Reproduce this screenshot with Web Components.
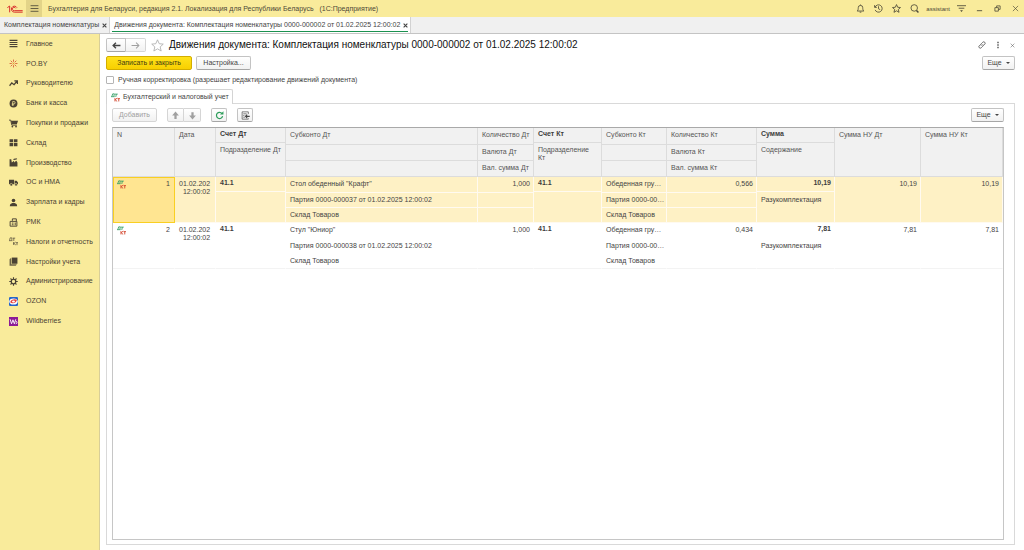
<!DOCTYPE html>
<html lang="ru">
<head>
<meta charset="utf-8">
<meta name="viewport" content="width=device-width, initial-scale=1">
<title>Движения документа</title>
<style>
html, body { height: 100%; margin: 0; }
body { font: 7px/8px "Liberation Sans", Arial, sans-serif; color: #444; background: #fff; }
</style>
</head>
<body>
<app-shell>
  <title-bar slot="top" user="assistant">Бухгалтерия для Беларуси, редакция 2.1. Локализация для Республики Беларусь &nbsp; (1С:Предприятие)</title-bar>
  <tab-strip slot="tabs">
    <window-tab>Комплектация номенклатуры</window-tab>
    <window-tab active>Движения документа: Комплектация номенклатуры 0000-000002 от 01.02.2025 12:00:02</window-tab>
  </tab-strip>
  <side-nav slot="nav">
    <nav-item icon="menu">Главное</nav-item>
    <nav-item icon="spark">PO.BY</nav-item>
    <nav-item icon="trend">Руководителю</nav-item>
    <nav-item icon="coin">Банк и касса</nav-item>
    <nav-item icon="cart">Покупки и продажи</nav-item>
    <nav-item icon="boxes">Склад</nav-item>
    <nav-item icon="factory">Производство</nav-item>
    <nav-item icon="truck">ОС и НМА</nav-item>
    <nav-item icon="person">Зарплата и кадры</nav-item>
    <nav-item icon="register">РМК</nav-item>
    <nav-item icon="dtktgrey">Налоги и отчетность</nav-item>
    <nav-item icon="books">Настройки учета</nav-item>
    <nav-item icon="gear">Администрирование</nav-item>
    <nav-item icon="ozon">OZON</nav-item>
    <nav-item icon="wb">Wildberries</nav-item>
  </side-nav>
  <document-form heading="Движения документа: Комплектация номенклатуры 0000-000002 от 01.02.2025 12:00:02">
    <page-panel label="Бухгалтерский и налоговый учет">
      <entries-table></entries-table>
    </page-panel>
  </document-form>
</app-shell>

<script>
const svg = (body, box = 16) => `<svg viewBox="0 0 ${box} ${box}" fill="none" stroke="currentColor" stroke-width="1.5" aria-hidden="true">${body}</svg>`;
const ICONS = {
  menu: svg('<path d="M1 2.5h14M1 6.2h14M1 9.8h14M1 13.5h14" stroke-width="2"/>'),
  burger: svg('<path d="M1 3h14M1 8h14M1 13h14"/>'),
  spark: svg('<g stroke="#d9603a" stroke-width="1.6"><path d="M8 1v4M8 11v4M1 8h4M11 8h4M3 3l3 3M10 10l3 3M13 3l-3 3M3 13l3-3"/></g><circle cx="8" cy="8" r="1.3" fill="#e0a030" stroke="none"/>'),
  trend: svg('<path d="M1 12l4-5 4 3 5-6M9.500 3.500H15V9" stroke-width="2.2"/>'),
  coin: svg('<circle cx="8" cy="8" r="7" fill="currentColor" stroke="none"/><path d="M6.500 12V4.500h2.300a2 2 0 010 4.200H5M5 10.500h4" stroke="#f9eb9b" stroke-width="1.3"/>'),
  cart: svg('<path d="M0 2h3l2 9h9" stroke-width="1.6"/><path d="M3.500 3H16l-2 6.500H5z" fill="currentColor" stroke="none"/><circle cx="6" cy="13.500" r="1.600" fill="currentColor" stroke="none"/><circle cx="12.500" cy="13.500" r="1.600" fill="currentColor" stroke="none"/>'),
  boxes: svg('<path d="M1 2h6.300v5.500H1zM8.700 2H15v5.500H8.700zM1 9h6.300v5.500H1zM8.700 9H15v5.500H8.700z" fill="currentColor" stroke="none"/>'),
  factory: svg('<path d="M1 15V2h3l1 6 4-3v3l4-3 2 3v7z" fill="currentColor" stroke="none"/><path d="M8 3c2-2 4 0 6-2" stroke-width="1.800"/>'),
  truck: svg('<path d="M0 3h9v8H0zM10 5h3.500L16 8v3h-6z" fill="currentColor" stroke="none"/><g fill="currentColor" stroke="#f9eb9b" stroke-width="1"><circle cx="4" cy="12" r="2.300"/><circle cx="12.500" cy="12" r="2.300"/></g>'),
  person: svg('<circle cx="8" cy="4.500" r="3.200" fill="currentColor" stroke="none"/><path d="M1.500 14.500c0-4 2-4.500 4.500-5.500h4c2.500 1 4.500 1.500 4.500 5.500z" fill="currentColor" stroke="none"/>'),
  register: svg('<path d="M2 6h12v8.500H2zM6 5V1.500h7V6M5 9h3M5 12h3M11 8v5" stroke-width="1.700"/>'),
  dtktgrey: svg('<path d="M1 6l1-4.500h3V6M0 6.500h6M6.500 2H11M8.500 2v5M8 9v5M12 9l-3.500 2.500L12 14M12.500 10H16M14.200 10v4.500" stroke-width="1.200"/>'),
  dtkt: svg('<path d="M1.500 6l1.500-4.500h3L5 6M0 6.500h6.500M7 2h5M9.500 2L8.500 7" stroke="#2f9c62" stroke-width="1.500"/><path d="M7 9v6M11 9l-3.500 3L11 15M11.500 10H16M13.800 10v5" stroke="#d2452c" stroke-width="1.600"/>'),
  books: svg('<path d="M5 1h10v11H5z" fill="currentColor" stroke="none"/><path d="M1 4l3-2.500V13h10l-2 2.500H1z" fill="currentColor" stroke="none" opacity=".8"/>'),
  gear: svg('<circle cx="8" cy="8" r="4" stroke-width="2.200"/><path d="M8 .5V4M8 12v3.500M.5 8H4M12 8h3.500M2.700 2.700L5 5M11 11l2.300 2.300M13.300 2.700L11 5M5 11l-2.300 2.300" stroke-width="2"/>'),
  ozon: svg('<rect width="16" height="16" rx="2" fill="#2864c8" stroke="none"/><ellipse cx="8" cy="8" rx="7.500" ry="5.500" fill="#fff" stroke="none"/><path d="M2 9.500c1-5 8-7 12-4.500 0 5-7 8-12 4.500z" fill="#e8403c" stroke="none"/><ellipse cx="8" cy="8" rx="2.600" ry="1.600" fill="#fff" stroke="none"/>'),
  wb: svg('<rect width="16" height="16" fill="#8c1b96" stroke="none"/><path d="M2 4l2.500 8L7 5l2.500 7L12 4M12 7.500a2.200 2.200 0 110 4.400" stroke="#fff" stroke-width="1.600"/>'),
  logo: '<svg viewBox="0 0 48 24" fill="none" stroke="#d8302c" stroke-width="3" aria-hidden="true"><path d="M1 8l7-5v19M30 8a9 9 0 10-8 13.500h25M26 10a5 5 0 10-4 7h25"/></svg>',
  bell: svg('<path d="M2 12.500c2-1.500 2-4 2-6a4 4 0 018 0c0 2 0 4.500 2 6zM6.500 14.500h3M8 2.500V1"/>'),
  history: svg('<path d="M2 5.500A6.500 6.500 0 112 10.500M1 2v4h4M8 4v4.500l3 1.500"/>'),
  star: svg('<path d="M8 1l2.100 4.800 5 .5-3.800 3.400 1.200 5.100L8 12.100l-4.500 2.700 1.200-5.100L.9 6.300l5-.5z"/>'),
  starthin: svg('<path d="M8 1l2.100 4.800 5 .5-3.800 3.400 1.200 5.100L8 12.100l-4.500 2.700 1.200-5.100L.9 6.300l5-.5z" stroke-width="1"/>'),
  search: svg('<circle cx="7.500" cy="7" r="5.800"/><path d="M11.500 11.500L15 15" stroke-width="2.600"/>'),
  filter: svg('<path d="M0 3h16M3 7.500h10"/><path d="M5.500 11h5L8 14z" fill="currentColor" stroke="none"/>'),
  minimize: svg('<path d="M2 13h12" stroke-width="2"/>'),
  restore: svg('<path d="M2 6h8v8H2zM6 6V2h8v8h-4" stroke-width="1.800"/>'),
  close: svg('<path d="M2 2l12 12M14 2L2 14"/>'),
  closebold: svg('<path d="M2 2l12 12M14 2L2 14" stroke-width="3.500"/>'),
  link: svg('<path d="M6.500 9.500a3 3 0 010-4l3-3a2.800 2.800 0 014 4L11 9M9.500 6.500a3 3 0 010 4l-3 3a2.800 2.800 0 01-4-4L5 7"/>'),
  dots: svg('<path d="M8 1.500v3M8 6.500v3M8 11.500v3" stroke-width="2.600"/>'),
  left: svg('<path d="M15 8H2M7 3L2 8l5 5" stroke-width="2.400"/>'),
  right: svg('<path d="M1 8h13M9 3l5 5-5 5" stroke-width="1.800"/>'),
  up: svg('<path d="M8 1l6 7h-4v6H6V8H2z" fill="currentColor" stroke="none"/>'),
  down: svg('<path d="M8 15l6-7h-4V2H6v6H2z" fill="currentColor" stroke="none"/>'),
  refresh: svg('<path d="M12.500 4.500A5.500 5.500 0 1013.500 9" stroke="#2e9e5b" stroke-width="2.200"/><path d="M9 6h6V.5z" fill="#2e9e5b" stroke="none"/>'),
  report: svg('<path d="M2 1.500h11v4M13 13v1.500H2v-13M4 5h6M4 8h2M4 11h3" stroke-width="1.200"/><path d="M15.500 9.500H8M11 6.500l-3 3 3 3" stroke-width="1.900"/>')
};

function define(name, html, setup) {
  const template = document.createElement('template');
  template.innerHTML = html;
  customElements.define(name, class extends HTMLElement {
    constructor() {
      super();
      this.attachShadow({ mode: 'open' }).append(template.content.cloneNode(true));
    }
    connectedCallback() { if (setup) setup(this, this.shadowRoot); }
  });
}

define('ui-icon', `<style>
  :host { display: inline-block; flex: none; width: var(--icon-size, 9px); height: var(--icon-size, 9px); }
  :host([name="logo"]) { width: 16px; height: 8px; }
  svg { display: block; width: 100%; height: 100%; }
</style><span></span>`, (el, root) => { root.querySelector('span').innerHTML = ICONS[el.getAttribute('name')] || ''; });

define('app-shell', `<style>
  :host { display: grid; min-height: 100vh; grid-template: auto auto 1fr / 100px minmax(0, 1fr);
    grid-template-areas: "top top" "tabs tabs" "nav main"; }
  header { grid-area: top; } .tabs { grid-area: tabs; } aside { grid-area: nav; display: flex; }
  main { grid-area: main; display: flex; min-width: 0; }
</style>
<header><slot name="top"></slot></header><div class="tabs"><slot name="tabs"></slot></div>
<aside><slot name="nav"></slot></aside><main><slot></slot></main>`);

define('title-bar', `<style>
  :host { display: flex; align-items: center; height: 17px; background: #f9eb9b; color: #4d4938; }
  button { all: unset; display: flex; align-items: center; justify-content: center; }
  .logo { margin-left: 7px; }
  .burger { width: 16px; height: 17px; margin: 0 6px 0 3px; background: #e3d488; }
  .title { flex: 1; white-space: nowrap; overflow: hidden; }
  .tools { display: flex; align-items: center; gap: 9px; padding-right: 4px; }
  .user { font-size: 6px; margin: 0 -2px; }
  .window { margin-left: 0; --icon-size: 7px; width: 9px; }
</style>
<ui-icon class="logo" name="logo"></ui-icon>
<button class="burger" aria-label="Меню"><ui-icon name="burger"></ui-icon></button>
<span class="title"><slot></slot></span>
<div class="tools">
  <button aria-label="Оповещения"><ui-icon name="bell"></ui-icon></button>
  <button aria-label="История"><ui-icon name="history"></ui-icon></button>
  <button aria-label="Избранное"><ui-icon name="star"></ui-icon></button>
  <button aria-label="Поиск"><ui-icon name="search"></ui-icon></button>
  <span class="user"></span>
  <button aria-label="Настройки"><ui-icon name="filter"></ui-icon></button>
  <button class="window" aria-label="Свернуть"><ui-icon name="minimize"></ui-icon></button>
  <button class="window" aria-label="Восстановить"><ui-icon name="restore"></ui-icon></button>
  <button class="window" aria-label="Закрыть"><ui-icon name="close"></ui-icon></button>
</div>`, (el, root) => { root.querySelector('.user').textContent = el.getAttribute('user'); });

define('tab-strip', `<style>
  :host { display: flex; height: 16px; background: #f0f0f0; border-bottom: 1px solid #c4c4c4; }
</style><slot></slot>`);

define('window-tab', `<style>
  :host { display: flex; align-items: center; gap: 3px; padding: 0 2px 0 4px; border-right: 1px solid #d2d2d2; position: relative; white-space: nowrap; }
  :host([active]) { background: #fff; }
  :host([active])::after { content: ""; position: absolute; left: 2px; right: 2px; bottom: 1px; height: 1px; background: #1b9150; }
  button { all: unset; display: flex; --icon-size: 5px; }
</style><slot></slot><button aria-label="Закрыть вкладку"><ui-icon name="closebold"></ui-icon></button>`);

define('side-nav', `<style>
  :host { display: block; flex: 1; background: #f9eb9b; border-right: 1px solid #d8ce98; }
  nav { display: grid; grid-auto-rows: 1fr; height: 297px; }
</style><nav><slot></slot></nav>`);

define('nav-item', `<style>
  :host { display: flex; }
  a { flex: 1; display: flex; align-items: center; gap: 8px; padding-left: 9px; color: #4a4234; text-decoration: none; white-space: nowrap; }
</style><a href="#"><ui-icon></ui-icon><span><slot></slot></span></a>`, (el, root) => {
  const icon = root.querySelector('ui-icon');
  icon.setAttribute('name', el.getAttribute('icon'));
  icon.connectedCallback();
});

define('ui-button', `<style>
  :host { display: inline-flex; height: 14px; }
  button { flex: 1; display: flex; align-items: center; justify-content: center; gap: 4px; box-sizing: border-box; margin: 0; padding: 0;
    font: inherit; color: inherit; white-space: nowrap; border: 1px solid #c3c3c3; border-bottom-color: #a6a6a6; border-radius: 2px;
    background: linear-gradient(#fff, #f1f1f1); }
  :host([kind="primary"]) button { background: linear-gradient(#ffe21a, #f8d000); border-color: #d3ad00; color: #443c10; }
  :host([kind="off"]) button { color: #a0a0a0; border-color: #d5d5d5; }
  :host([side="left"]) button { border-radius: 2px 0 0 2px; }
  :host([side="right"]) button { border-radius: 0 2px 2px 0; border-left: 0; }
  .arrow { display: none; border: 2px solid transparent; border-top-color: currentColor; border-bottom: 0; }
  :host([menu]) .arrow { display: block; }
</style><button><slot></slot><i class="arrow"></i></button>`, (el, root) => {
  const label = el.getAttribute('label');
  if (label) root.querySelector('button').setAttribute('aria-label', label);
  if (!el.hasAttribute('menu')) root.querySelector('.arrow').remove();
});

define('document-form', `<style>
  :host { display: flex; flex: 1; min-width: 0; flex-direction: column; padding: 4px 9px 5px 6px; }
  .head { display: flex; align-items: center; height: 14px; }
  .head ui-button { width: 20px; }
  .star { --icon-size: 13px; color: #aaa; margin: 0 5px; }
  h1 { flex: 1; margin: 0; font-size: 10px; line-height: 14px; font-weight: 400; color: #111; white-space: nowrap; }
  .plain { all: unset; display: flex; margin-left: 8px; --icon-size: 8px; }
  .plain.small { --icon-size: 5px; }
  .commands { display: flex; gap: 4px; margin-top: 4px; }
  .save { width: 86px; } .setup { width: 55px; } .more { width: 33px; margin-left: auto; }
  label { display: flex; align-items: center; gap: 4px; height: 10px; margin: 5px 0 4px; }
  input { appearance: none; width: 8px; height: 8px; margin: 0; border: 1px solid #b5b5b5; border-radius: 1px; background: #fff; }
</style>
<div class="head">
  <ui-button side="left" label="Назад"><ui-icon name="left"></ui-icon></ui-button>
  <ui-button side="right" kind="off" label="Вперед"><ui-icon name="right"></ui-icon></ui-button>
  <ui-icon class="star" name="starthin"></ui-icon><h1></h1>
  <button class="plain" aria-label="Ссылка"><ui-icon name="link"></ui-icon></button>
  <button class="plain" aria-label="Действия"><ui-icon name="dots"></ui-icon></button>
  <button class="plain small" aria-label="Закрыть"><ui-icon name="close"></ui-icon></button>
</div>
<div class="commands">
  <ui-button class="save" kind="primary">Записать и закрыть</ui-button>
  <ui-button class="setup">Настройка...</ui-button>
  <ui-button class="more" menu>Еще</ui-button>
</div>
<label><input type="checkbox">Ручная корректировка (разрешает редактирование движений документа)</label>
<slot></slot>`, (el, root) => { root.querySelector('h1').textContent = el.getAttribute('heading'); });

define('page-panel', `<style>
  :host { display: flex; flex: 1; flex-direction: column; }
  .tab { position: relative; z-index: 1; align-self: flex-start; display: flex; align-items: center; gap: 3px; box-sizing: border-box; height: 15px; padding: 0 3px 0 4px;
    margin-bottom: -1px; background: #fff; border: 1px solid #d4d4d4; border-bottom: 0; border-radius: 2px 2px 0 0; }
  .page { display: flex; flex: 1; flex-direction: column; padding: 4px 10px 4px 5px; border: 1px solid #d9d9d9; }
  .bar { display: flex; height: 14px; align-items: center; margin-bottom: 5px; }
  .add { width: 45px; margin-right: 10px; } .move { width: 17px; } .sq { width: 16px; margin-left: 10px; } .more { width: 33px; margin-left: auto; }
</style>
<div class="tab"><ui-icon name="dtkt"></ui-icon><span></span></div>
<div class="page">
  <div class="bar">
    <ui-button class="add" kind="off">Добавить</ui-button>
    <ui-button class="move" side="left" kind="off" label="Вверх"><ui-icon name="up"></ui-icon></ui-button>
    <ui-button class="move" side="right" kind="off" label="Вниз"><ui-icon name="down"></ui-icon></ui-button>
    <ui-button class="sq" label="Обновить"><ui-icon name="refresh"></ui-icon></ui-button>
    <ui-button class="sq" label="Отчет"><ui-icon name="report"></ui-icon></ui-button>
    <ui-button class="more" menu>Еще</ui-button>
  </div>
  <slot></slot>
</div>`, (el, root) => { root.querySelector('.tab span').textContent = el.getAttribute('label'); });

const WIDTHS = [62, 41, 70, 192, 56, 68, 65, 90, 78, 86, 82];
const HEAD = [['N'], ['Дата'], ['*Счет Дт', 'Подразделение Дт'], ['Субконто Дт', '', ''], ['Количество Дт', 'Валюта Дт', 'Вал. сумма Дт'],
  ['*Счет Кт', 'Подразделение Кт'], ['Субконто Кт', '', ''], ['Количество Кт', 'Валюта Кт', 'Вал. сумма Кт'], ['*Сумма', 'Содержание'], ['Сумма НУ Дт'], ['Сумма НУ Кт']];
const entry = (n, item, batch, qtyDt, qtyKt, sum) => [[n], ['01.02.202 12:00:02'], ['*41.1', ''], [item, `Партия 0000-${batch} от 01.02.2025 12:00:02`, 'Склад Товаров'],
  ['>' + qtyDt, '', ''], ['*41.1', ''], ['Обеденная гру…', 'Партия 0000-00…', 'Склад Товаров'], ['>' + qtyKt, '', ''], ['*>' + sum, 'Разукомплектация'], ['>' + sum], ['>' + sum]];
const ROWS = [entry('1', 'Стол обеденный "Крафт"', '000037', '1,000', '0,566', '10,19'), entry('2', 'Стул "Юниор"', '000038', '1,000', '0,434', '7,81')];
const stack = (lines) => `<div class="stack n${lines.length}">` + lines.map(t => {
  const bold = t.startsWith('*'), right = t.includes('>');
  return `<div class="${bold ? 'bold ' : ''}${right ? 'right' : ''}">${t.replace(/[*>]/g, '')}</div>`;
}).join('') + '</div>';

define('entries-table', `<style>
  :host { display: block; flex: 1; border: 1px solid #c6c6c6; border-top-color: #a9a9a9; }
  table { width: 100%; table-layout: fixed; border-collapse: separate; border-spacing: 0; }
  th, td { padding: 0; font-weight: 400; text-align: left; vertical-align: top; box-sizing: border-box; }
  th { height: 49px; background: #f1f1f1; border-right: 1px solid #dcdcdc; border-bottom: 1px solid #dcdcdc; color: #555; }
  td { height: 46px; border-right: 1px solid transparent; border-bottom: 1px solid #f3f3f3; }
  .chosen td { background: #fef1c5; border-color: #fffaf0; }
  .stack { display: grid; }
  th .stack { height: 48px; } td .stack { height: 45px; }
  .stack > div { padding: 3px 3px 0 4px; line-height: 8px; box-sizing: border-box; }
  .n3 { grid-template-rows: repeat(3, 1fr); }
  .n3 > div { white-space: nowrap; }
  .n2 { grid-template-rows: 14px 1fr; }
  .n3 > div + div, .n2 > div + div { border-top: 1px solid transparent; }
  th .n3 > div + div, th .n2 > div + div { border-color: #dcdcdc; }
  .chosen .n3 > div + div, .chosen .n2 > div + div { border-color: #fffaf0; }
  .stack > .bold { font-weight: 700; padding-top: 2px; color: #3d3d3d; }
  .right { text-align: right; }
  td .n2 > div + div { padding-top: 4px; }
  .date .stack > div { text-align: right; padding-right: 5px; }
  .num { display: flex; justify-content: space-between; height: 45px; padding: 3px 4px 0 4px; box-sizing: border-box; }
  .chosen .current { border: 0; }
  .current .num { height: 46px; background: #ffe591; border: 1px solid #f9cf22; padding: 2px 4px 0 3px; }
</style>
<table><colgroup></colgroup><thead><tr></tr></thead><tbody></tbody></table>`, (el, root) => {
  root.querySelector('colgroup').innerHTML = WIDTHS.map(w => `<col style="width:${w}px">`).join('');
  root.querySelector('thead tr').innerHTML = HEAD.map(c => `<th scope="col">${stack(c)}</th>`).join('');
  root.querySelector('tbody').innerHTML = ROWS.map((row, i) => `<tr class="${i ? '' : 'chosen'}">` + row.map((c, k) =>
    k === 0 ? `<td class="${i ? '' : 'current'}"><div class="num"><ui-icon name="dtkt"></ui-icon><span>${c[0]}</span></div></td>`
            : `<td class="${k === 1 ? 'date' : ''}">${stack(c)}</td>`).join('') + '</tr>').join('');
});
</script>
</body>
</html>
